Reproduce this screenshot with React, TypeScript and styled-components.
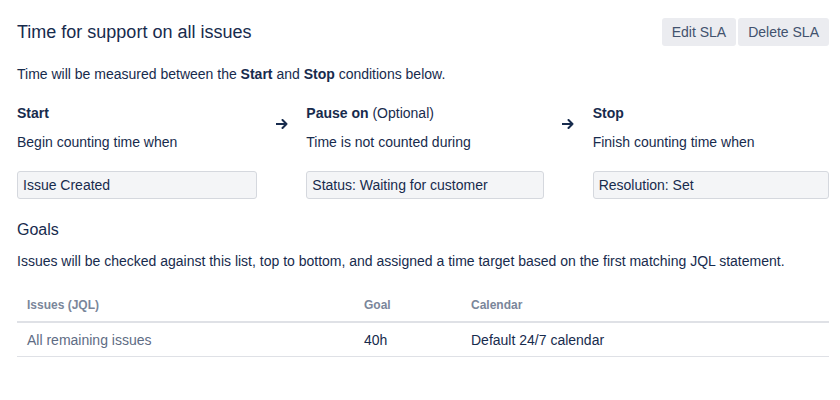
import React from 'react'
import styled, { createGlobalStyle } from 'styled-components'

const GlobalStyle = createGlobalStyle`
  body {
    margin: 0;
    background: #ffffff;
    font-family: "Liberation Sans", Arial, sans-serif;
    color: #172b4d;
  }
`

const conditions = [
  { title: 'Start', extra: '', hint: 'Begin counting time when', value: 'Issue Created' },
  { title: 'Pause on', extra: ' (Optional)', hint: 'Time is not counted during', value: 'Status: Waiting for customer' },
  { title: 'Stop', extra: '', hint: 'Finish counting time when', value: 'Resolution: Set' },
]

const goals = [{ jql: 'All remaining issues', goal: '40h', calendar: 'Default 24/7 calendar' }]

const ArrowIcon = () => (
  <svg width="12" height="10" viewBox="0 0 12 10" fill="none">
    <path d="M0.5 5H10.5M6.5 1L10.5 5L6.5 9" stroke="#172b4d" strokeWidth="2" strokeLinecap="round" strokeLinejoin="round" />
  </svg>
)

const App = () => {
  return (
    <Page>
      <GlobalStyle />
      <Header>
        <Title>Time for support on all issues</Title>
        <ButtonGroup>
          <Button>Edit SLA</Button>
          <Button>Delete SLA</Button>
        </ButtonGroup>
      </Header>

      <Intro>
        Time will be measured between the <b>Start</b> and <b>Stop</b> conditions below.
      </Intro>

      <Conditions>
        {conditions.map((c, i) => (
          <React.Fragment key={c.title}>
            {i > 0 && (
              <Arrow>
                <ArrowIcon />
              </Arrow>
            )}
            <Condition>
              <ConditionLabel>
                <b>{c.title}</b>
                {c.extra}
              </ConditionLabel>
              <ConditionHint>{c.hint}</ConditionHint>
              <ConditionBox>{c.value}</ConditionBox>
            </Condition>
          </React.Fragment>
        ))}
      </Conditions>

      <SectionTitle>Goals</SectionTitle>
      <Intro $tight>
        Issues will be checked against this list, top to bottom, and assigned a time target based on the first
        matching JQL statement.
      </Intro>

      <GoalTable>
        <thead>
          <tr>
            <HeadCell $width="337px">Issues (JQL)</HeadCell>
            <HeadCell $width="107px">Goal</HeadCell>
            <HeadCell>Calendar</HeadCell>
          </tr>
        </thead>
        <tbody>
          {goals.map((g) => (
            <tr key={g.jql}>
              <Cell $muted>{g.jql}</Cell>
              <Cell>{g.goal}</Cell>
              <Cell>{g.calendar}</Cell>
            </tr>
          ))}
        </tbody>
      </GoalTable>
    </Page>
  )
}

const Page = styled.div`
  padding: 18px 11px 0 17px;
  font-size: 14px;
`

const Header = styled.div`
  display: flex;
  justify-content: space-between;
  align-items: center;
  height: 28px;
`

const Title = styled.h1`
  margin: 0;
  font-size: 18px;
  font-weight: 500;
  color: #172b4d;
`

const ButtonGroup = styled.div`
  display: flex;
  gap: 2px;
`

const Button = styled.button`
  height: 28px;
  padding: 0 10px;
  border: none;
  border-radius: 3px;
  background: #ebecf0;
  color: #42526e;
  font-family: inherit;
  font-size: 14px;
`

const Intro = styled.p<{ $tight?: boolean }>`
  margin: ${({ $tight }) => ($tight ? '10px' : '18px')} 0 0;
  line-height: 20px;
  color: #172b4d;
`

const Conditions = styled.div`
  display: grid;
  grid-template-columns: 241fr 49px 238fr 49px 237fr;
  margin-top: 19px;
`

const Condition = styled.div`
  display: flex;
  flex-direction: column;
`

const ConditionLabel = styled.div`
  line-height: 20px;
`

const ConditionHint = styled.div`
  margin-top: 9px;
  line-height: 20px;
`

const ConditionBox = styled.div`
  margin-top: 19px;
  height: 26px;
  line-height: 26px;
  padding: 0 5px;
  background: #f4f5f7;
  border: 1px solid #d5d8de;
  border-radius: 3px;
`

const Arrow = styled.div`
  display: flex;
  justify-content: center;
  padding-top: 16px;
`

const SectionTitle = styled.h2`
  margin: 20px 0 0;
  font-size: 16px;
  font-weight: 500;
  line-height: 22px;
`

const GoalTable = styled.table`
  width: 100%;
  margin-top: 27px;
  border-collapse: collapse;
  table-layout: fixed;
`

const HeadCell = styled.th<{ $width?: string }>`
  box-sizing: border-box;
  width: ${({ $width }) => $width || 'auto'};
  padding: 0 10px 9px;
  text-align: left;
  font-size: 12px;
  font-weight: 700;
  color: #7a869a;
  border-bottom: 2px solid #dfe1e6;
`

const Cell = styled.td<{ $muted?: boolean }>`
  padding: 9px 10px 7px;
  line-height: 17px;
  color: ${({ $muted }) => ($muted ? '#5e6c84' : '#172b4d')};
  border-bottom: 1px solid #dfe1e6;
`

export default App
